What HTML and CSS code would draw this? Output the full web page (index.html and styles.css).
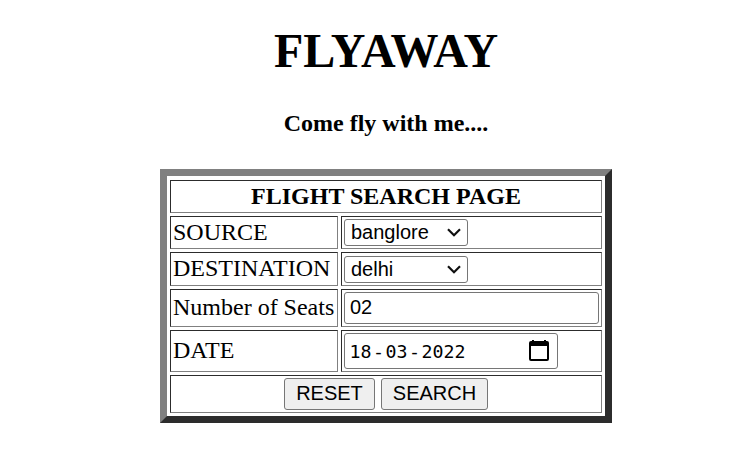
FILE: index.html
```html
<!DOCTYPE html>
<html lang="en">
<head>
<meta charset="utf-8">
<title>Flyaway</title>
<link rel="stylesheet" href="styles.css">
</head>
<body>
<h1>FLYAWAY</h1>
<h4>Come fly with me....</h4>
<table class="search">
  <colgroup><col class="labels"><col class="fields"></colgroup>
  <tr class="r-title"><th colspan="2"><div class="label">FLIGHT SEARCH PAGE</div></th></tr>
  <tr class="r-source">
    <td><div class="label">SOURCE</div></td>
    <td><div class="control select"><span>banglore</span><svg class="arrow" viewBox="0 0 14 9"><path d="M1 1.2 7 7.2 13 1.2"/></svg></div></td>
  </tr>
  <tr class="r-destination">
    <td><div class="label">DESTINATION</div></td>
    <td><div class="control select"><span>delhi</span><svg class="arrow" viewBox="0 0 14 9"><path d="M1 1.2 7 7.2 13 1.2"/></svg></div></td>
  </tr>
  <tr class="r-seats">
    <td><div class="label">Number of Seats</div></td>
    <td><div class="control text"><span>02</span></div></td>
  </tr>
  <tr class="r-date">
    <td><div class="label">DATE</div></td>
    <td><div class="control date"><span class="value"><span>18</span><span class="dash">-</span><span>03</span><span class="dash">-</span><span>2022</span></span><svg class="calendar" viewBox="0 0 20 22"><path fill-rule="evenodd" d="M3 1h2v1h10V1h2v1h1q2 0 2 2v16q0 2-2 2H2q-2 0-2-2V4q0-2 2-2h1zM2 7v13h16V7z"/></svg></div></td>
  </tr>
  <tr class="r-actions"><td colspan="2"><div class="actions"><button class="reset" type="reset">RESET</button><button class="submit" type="submit">SEARCH</button></div></td></tr>
</table>
</body>
</html>
```
FILE: styles.css
```css
body {
  margin: 0;
  width: 772px;
  background: #fff;
  color: #000;
  font-family: "Liberation Serif", serif;
  font-size: 24px;
}
html { overflow: hidden; }
h1 {
  margin: 0;
  padding-top: 23px;
  font-size: 48px;
  line-height: 56px;
  text-align: center;
}
h4 {
  margin: 30px 0 31px;
  font-size: 24px;
  line-height: 29px;
  text-align: center;
}
.search {
  box-sizing: border-box;
  width: 452px;
  margin: 0 auto;
  padding-top: 1px;
  border: 7px solid;
  border-color: #808080 #2c2c2c #2c2c2c #808080;
  border-collapse: separate;
  border-spacing: 3px;
  table-layout: fixed;
}
.labels { width: 168px; }
.fields { width: 261px; }
th, td {
  box-sizing: border-box;
  padding: 2px;
  border: 1px solid;
  border-color: #2c2c2c #808080 #808080 #2c2c2c;
  vertical-align: top;
}
.label {
  height: 100%;
  line-height: 27px;
  white-space: nowrap;
}
.r-title, .r-source { height: 33px; }
.r-destination { height: 34px; }
.r-seats, .r-actions { height: 38px; }
.r-date { height: 42px; }
.r-seats .label { line-height: 31px; }
.r-date .label { line-height: 35px; }
.r-destination .control { margin-top: 1px; }
.control {
  box-sizing: border-box;
  display: flex;
  align-items: center;
  border: 1px solid #767676;
  border-radius: 3px;
  font-family: "Liberation Sans", sans-serif;
  font-size: 20px;
  line-height: 23px;
}
.select {
  justify-content: space-between;
  width: 124px;
  height: 27px;
  padding: 0 6px;
}
.text { width: 255px; height: 32px; padding: 0 5px 2px; }
.date {
  justify-content: space-between;
  width: 214px;
  height: 36px;
  padding: 0 8px 0 4.5px;
}
.value {
  display: flex;
  padding-top: 1px;
  font-family: "DejaVu Sans Mono", monospace;
  font-size: 18.27px;
}
.dash { margin: 0 1.5px; }
.arrow {
  width: 14px;
  height: 9px;
  fill: none;
  stroke: #101010;
  stroke-width: 2.2;
}
.calendar { width: 20px; height: 22px; margin-bottom: 2px; }
.actions {
  display: flex;
  justify-content: center;
  gap: 6px;
}
button {
  box-sizing: border-box;
  height: 32px;
  padding: 0 0 2px;
  border: 1px solid #767676;
  border-radius: 3px;
  background: #efefef;
  color: #000;
  font: 20px/23px "Liberation Sans", sans-serif;
}
.reset { width: 91px; }
.submit { width: 107px; }
```
